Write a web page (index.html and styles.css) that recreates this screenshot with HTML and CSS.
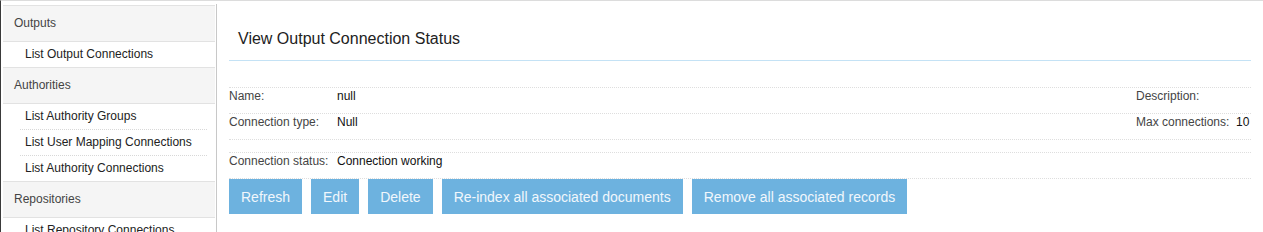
FILE: index.html
```html
<!DOCTYPE html>
<html lang="en">
<head>
    <meta charset="UTF-8">
    <title>View Output Connection Status</title>
    <link rel="stylesheet" href="styles.css">
</head>
<body>

    <div class="page">
        <div class="sidebar">
            <div class="menu-header">Outputs</div>
            <div class="menu-group">
                <a href="#">List Output Connections</a>
            </div>
            <div class="menu-header">Authorities</div>
            <div class="menu-group">
                <a href="#">List Authority Groups</a>
                <a href="#">List User Mapping Connections</a>
                <a href="#">List Authority Connections</a>
            </div>
            <div class="menu-header">Repositories</div>
            <div class="menu-group">
                <a href="#">List Repository Connections</a>
            </div>
        </div>

        <div class="content">
            <h1 class="title">View Output Connection Status</h1>

            <div class="details">
                <div class="row">
                    <div class="cell">
                        <span class="label">Name:</span>
                        <span class="value">null</span>
                    </div>
                    <div class="cell right">
                        <span class="label">Description:</span>
                        <span class="value"></span>
                    </div>
                </div>
                <div class="row">
                    <div class="cell">
                        <span class="label">Connection type:</span>
                        <span class="value">Null</span>
                    </div>
                    <div class="cell right">
                        <span class="label">Max connections:</span>
                        <span class="value">10</span>
                    </div>
                </div>
                <div class="row spacer"></div>
                <div class="row">
                    <div class="cell">
                        <span class="label">Connection status:</span>
                        <span class="value">Connection working</span>
                    </div>
                </div>
                <div class="row buttons">
                    <button class="btn">Refresh</button>
                    <button class="btn">Edit</button>
                    <button class="btn">Delete</button>
                    <button class="btn">Re-index all associated documents</button>
                    <button class="btn">Remove all associated records</button>
                </div>
            </div>
        </div>
    </div>

</body>
</html>
```

FILE: styles.css
```css
* {
    margin: 0;
    padding: 0;
    box-sizing: border-box;
    font-family: 'Liberation Sans', Arial, sans-serif;
}

body {
    height: 100vh;
    overflow: hidden;
    background: #fff;
    border-top: 1px solid #dcdcdc;
    border-left: 1px solid #3a3a3a;
    font-size: 12px;
    color: #222;
}

.page {
    display: flex;
    align-items: flex-start;
    height: 100%;
    padding-left: 2px;
}

.sidebar {
    width: 212px;
    margin-top: 4px;
}

.menu-header {
    height: 36px;
    line-height: 35px;
    padding-left: 11px;
    border-top: 1px solid #e2e2e2;
    background-color: #f5f5f5;
    color: #444;
}

.menu-group {
    border-top: 1px solid #e2e2e2;
}

.menu-group a {
    display: block;
    height: 26px;
    line-height: 25px;
    margin-left: 17px;
    margin-right: 8px;
    padding-left: 5px;
    color: #222;
    text-decoration: none;
    white-space: nowrap;
}

.menu-group a + a {
    border-top: 1px dotted #d8d8d8;
}

.menu-group a:first-child {
    height: 25px;
}

.content {
    flex: 1;
    align-self: stretch;
    margin-top: 3px;
    margin-left: 1px;
    border-left: 1px solid #c8c8c8;
    padding: 25px 12px 0 12px;
}

.title {
    font-size: 16px;
    font-weight: normal;
    line-height: 20px;
    color: #222;
    padding: 0 0 11px 9px;
    border-bottom: 1px solid #c4e2f5;
}

.details {
    margin-top: 26px;
}

.row {
    display: flex;
    justify-content: space-between;
    height: 26px;
    padding-top: 1px;
    line-height: 14px;
    border-top: 1px dotted #dedede;
}

.row.spacer {
    height: 13px;
}

.cell {
    display: flex;
}

.cell .label {
    width: 108px;
    color: #444;
}

.cell.right {
    width: 115px;
}

.cell.right .label {
    width: 100px;
}

.value {
    color: #111;
}

.row.buttons {
    justify-content: flex-start;
    height: auto;
    padding-top: 0;
}

.btn {
    height: 35px;
    padding: 0 12px;
    margin-right: 9px;
    font-size: 14px;
    border: none;
    background-color: #6db2df;
    color: #f1f7fc;
    cursor: pointer;
}
```
